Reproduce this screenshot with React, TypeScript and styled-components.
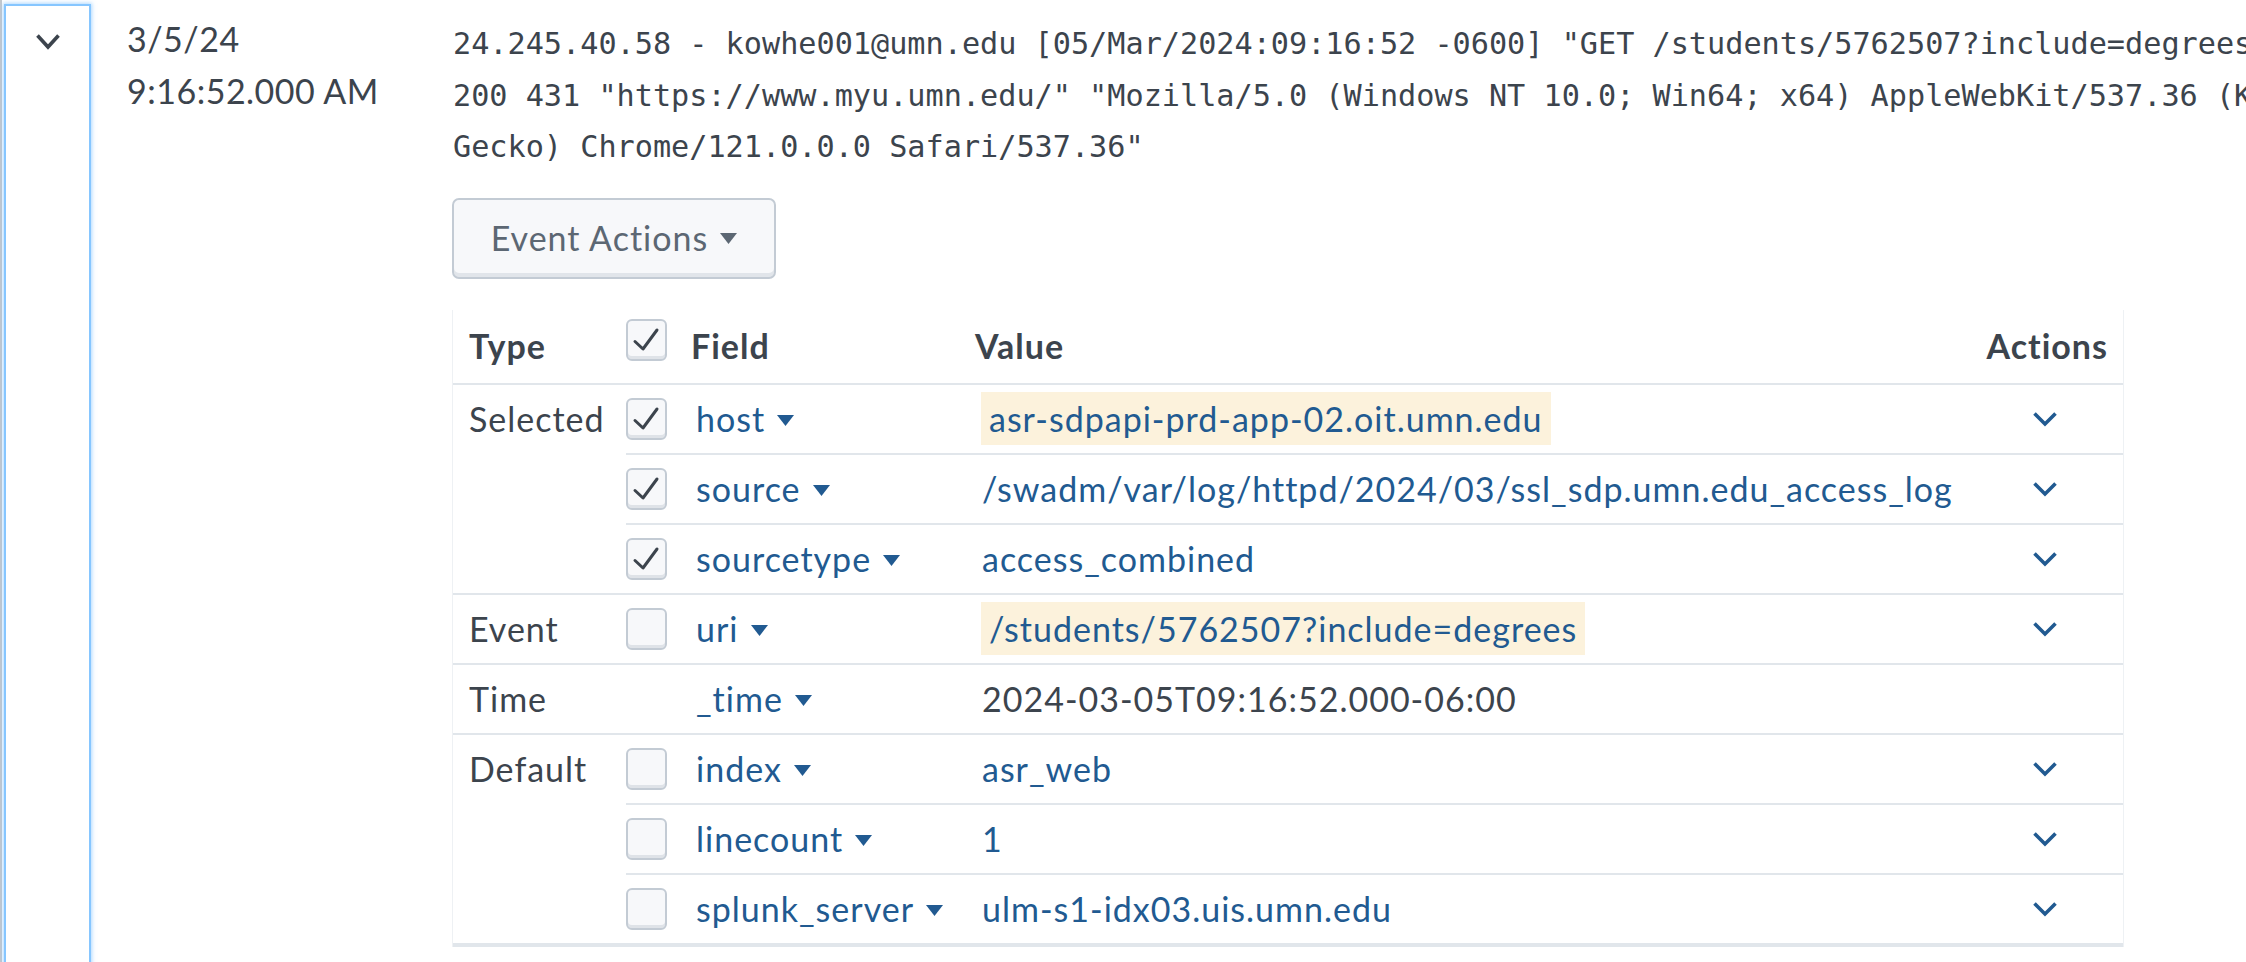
import React from "react";
import styled, { createGlobalStyle } from "styled-components";

const Global = createGlobalStyle`
  html, body { margin: 0; padding: 0; background: #ffffff; }
  body {
    width: 2246px;
    height: 962px;
    overflow: hidden;
    font-family: Lato, "Noto Sans", sans-serif;
    color: #3c444d;
  }
`;

const TEXT = "#3c444d";
const LINK = "#215a91";
const LINE = "#e1e6eb";

const Page = styled.div`
  display: flex;
  align-items: stretch;
  border-left: 2px solid #c4c8cd;
  min-height: 1000px;
`;

const ToggleCell = styled.div`
  width: 89px;
  flex: none;
  display: flex;
  padding: 4px 0 0 2px;
  box-sizing: border-box;
`;

const ToggleBox = styled.div`
  flex: 1;
  border: 2px solid #86c6ff;
  box-shadow: 0 0 4px 1px rgba(110, 185, 255, 0.55);
  display: flex;
  justify-content: center;
  align-items: flex-start;
  padding-top: 27px;
`;

const TimeCell = styled.div`
  width: 361px;
  flex: none;
  box-sizing: border-box;
  padding: 13px 0 0 36px;
  font-size: 34px;
  letter-spacing: 0.5px;
  line-height: 52px;
  color: ${TEXT};
`;

const EventCell = styled.div`
  flex: 1;
  min-width: 0;
  padding: 18px 0 40px 0;
`;

const RawText = styled.div`
  font-family: "DejaVu Sans Mono", "Liberation Mono", monospace;
  font-size: 30.2px;
  line-height: 51.5px;
  white-space: pre;
  color: ${TEXT};
  margin-left: 1px;
`;

const ActionsButton = styled.button`
  margin-top: 25px;
  width: 324px;
  height: 81px;
  box-sizing: border-box;
  display: flex;
  align-items: center;
  justify-content: center;
  gap: 12px;
  background: #f7f8fa;
  border: 2px solid #c3cbd4;
  border-radius: 7px;
  box-shadow: inset 0 -4px 0 #e1e5ea;
  font-family: Lato, "Noto Sans", sans-serif;
  font-size: 34px;
  letter-spacing: 1px;
  color: #5c6773;
  padding: 0 0 2px 0;
  cursor: pointer;
`;

const Table = styled.table`
  margin-top: 31px;
  width: 1672px;
  table-layout: fixed;
  border-collapse: separate;
  border-spacing: 0;
  border-left: 1px solid #eef1f4;
  border-right: 1px solid #eef1f4;
  font-size: 34px;
  letter-spacing: 1px;
  color: ${TEXT};
`;

const Th = styled.th<{ $pl?: number; $pr?: number; $align?: string; $top?: boolean }>`
  box-sizing: border-box;
  height: 75px;
  padding: ${(p) => (p.$top ? "9px" : "0")} ${(p) => p.$pr ?? 0}px 0 ${(p) => p.$pl ?? 0}px;
  vertical-align: ${(p) => (p.$top ? "top" : "middle")};
  text-align: ${(p) => p.$align ?? "left"};
  font-weight: 700;
  line-height: 40px;
  border-bottom: 2px solid ${LINE};
`;

const Td = styled.td<{ $pl?: number; $pr?: number; $last?: boolean; $type?: boolean }>`
  box-sizing: border-box;
  height: ${(p) => (p.$last ? 72 : 70)}px;
  padding: ${(p) => (p.$type ? "14px" : "0")} ${(p) => p.$pr ?? 0}px 0 ${(p) => p.$pl ?? 0}px;
  vertical-align: ${(p) => (p.$type ? "top" : "middle")};
  line-height: 40px;
  white-space: nowrap;
  border-bottom: ${(p) => (p.$last ? 4 : 2)}px solid ${LINE};
`;

const FieldLink = styled.span`
  color: ${LINK};
  white-space: nowrap;
`;

const Caret = styled.svg`
  display: inline-block;
  vertical-align: 6px;
  margin-left: 12px;
`;

const BtnCaret = styled.svg`
  display: block;
  margin-top: 2px;
`;

const Value = styled.span<{ $plain?: boolean }>`
  color: ${(p) => (p.$plain ? TEXT : LINK)};
`;

const Highlight = styled.span`
  display: inline-block;
  line-height: 53px;
  padding: 0 8px 0 8px;
  margin-left: -1px;
  background: #fcf2dc;
  color: ${LINK};
`;

const CheckBox = styled.span`
  display: block;
  width: 41px;
  height: 42px;
  box-sizing: border-box;
  border: 2px solid #c3cbd4;
  border-radius: 6px;
  background: #f7f8fa;
  box-shadow: inset 0 -3px 0 #dfe3e8;
  svg { display: block; }
`;

const ActionChevron = styled.svg`
  display: block;
  margin-left: auto;
`;

const Chevron = ({ color, w = 26, h = 17, sw = 3.6 }: { color: string; w?: number; h?: number; sw?: number }) => (
  <svg width={w} height={h} viewBox={`0 0 ${w} ${h}`}>
    <path d={`M2.5 2.5 L${w / 2} ${h - 3} L${w - 2.5} 2.5`} fill="none" stroke={color} strokeWidth={sw} />
  </svg>
);

const Check = ({ checked }: { checked: boolean }) => (
  <CheckBox>
    {checked && (
      <svg width="37" height="36" viewBox="0 0 37 36">
        <path d="M7 20.5 L15 28 L29 9" fill="none" stroke={TEXT} strokeWidth="3" strokeLinecap="round" strokeLinejoin="round" />
      </svg>
    )}
  </CheckBox>
);

const CaretIcon = ({ color }: { color: string }) => (
  <polygon points="0,0 17,0 8.5,11" fill={color} />
);

type Row = {
  type?: string;
  span?: number;
  check?: boolean;
  field: string;
  value: string;
  highlight?: boolean;
  plain?: boolean;
  action?: boolean;
};

const rows: Row[] = [
  { type: "Selected", span: 3, check: true, field: "host", value: "asr-sdpapi-prd-app-02.oit.umn.edu", highlight: true, action: true },
  { check: true, field: "source", value: "/swadm/var/log/httpd/2024/03/ssl_sdp.umn.edu_access_log", action: true },
  { check: true, field: "sourcetype", value: "access_combined", action: true },
  { type: "Event", span: 1, check: false, field: "uri", value: "/students/5762507?include=degrees", highlight: true, action: true },
  { type: "Time", span: 1, field: "_time", value: "2024-03-05T09:16:52.000-06:00", plain: true, action: false },
  { type: "Default", span: 3, check: false, field: "index", value: "asr_web", action: true },
  { check: false, field: "linecount", value: "1", action: true },
  { check: false, field: "splunk_server", value: "ulm-s1-idx03.uis.umn.edu", action: true },
];

const RAW = [
  '24.245.40.58 - kowhe001@umn.edu [05/Mar/2024:09:16:52 -0600] "GET /students/5762507?include=degrees HTTP/1.1"',
  '200 431 "https://www.myu.umn.edu/" "Mozilla/5.0 (Windows NT 10.0; Win64; x64) AppleWebKit/537.36 (KHTML, like',
  'Gecko) Chrome/121.0.0.0 Safari/537.36"',
].join("\n");

export default function App() {
  const lastIndex = rows.length - 1;
  return (
    <>
      <Global />
      <Page>
        <ToggleCell>
          <ToggleBox>
            <Chevron color={TEXT} />
          </ToggleBox>
        </ToggleCell>
        <TimeCell>
          <div>3/5/24</div>
          <div>9:16:52.000 AM</div>
        </TimeCell>
        <EventCell>
          <RawText>{RAW}</RawText>
          <ActionsButton>
            <span>Event Actions</span>
            <BtnCaret width="17" height="11" viewBox="0 0 17 11">
              <CaretIcon color="#5c6773" />
            </BtnCaret>
          </ActionsButton>
          <Table>
            <colgroup>
              <col style={{ width: 173 }} />
              <col style={{ width: 56 }} />
              <col style={{ width: 293 }} />
              <col style={{ width: 995 }} />
              <col style={{ width: 153 }} />
            </colgroup>
            <thead>
              <tr>
                <Th $pl={16}>Type</Th>
                <Th $top>
                  <Check checked />
                </Th>
                <Th $pl={9}>Field</Th>
                <Th>Value</Th>
                <Th $align="right" $pr={15}>Actions</Th>
              </tr>
            </thead>
            <tbody>
              {rows.map((r, i) => {
                const last = i === lastIndex;
                const groupLast = r.span ? i + r.span - 1 === lastIndex : false;
                return (
                  <tr key={r.field}>
                    {r.type && (
                      <Td rowSpan={r.span} $type $pl={16} $last={groupLast}>
                        {r.type}
                      </Td>
                    )}
                    <Td $last={last}>{r.check !== undefined && <Check checked={r.check} />}</Td>
                    <Td $pl={14} $last={last}>
                      <FieldLink>{r.field}</FieldLink>
                      <Caret width="17" height="11" viewBox="0 0 17 11">
                        <CaretIcon color={LINK} />
                      </Caret>
                    </Td>
                    <Td $pl={7} $last={last}>
                      {r.highlight ? <Highlight>{r.value}</Highlight> : <Value $plain={r.plain}>{r.value}</Value>}
                    </Td>
                    <Td $pr={65} $last={last}>
                      {r.action && (
                        <ActionChevron width="26" height="16" viewBox="0 0 26 16">
                          <path d="M2.5 2.5 L13 13 L23.5 2.5" fill="none" stroke={LINK} strokeWidth="3.6" />
                        </ActionChevron>
                      )}
                    </Td>
                  </tr>
                );
              })}
            </tbody>
          </Table>
        </EventCell>
      </Page>
    </>
  );
}
